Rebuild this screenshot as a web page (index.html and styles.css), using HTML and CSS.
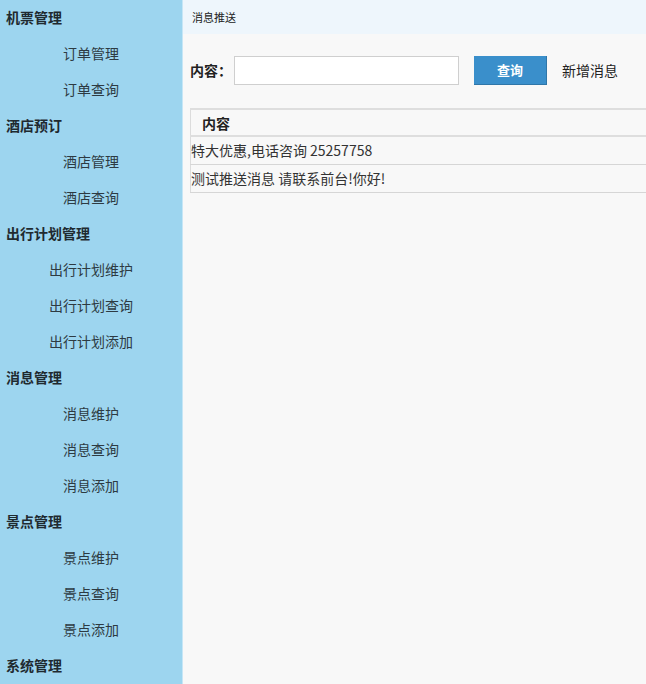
FILE: index.html
```html
<!DOCTYPE html>
<html lang="zh">
<head>
<meta charset="utf-8">
<title>消息推送</title>
<link rel="stylesheet" href="styles.css">
</head>
<body>
<div class="layout">
  <aside class="sidebar">
    <div class="group">机票管理</div>
    <div class="item">订单管理</div>
    <div class="item">订单查询</div>
    <div class="group">酒店预订</div>
    <div class="item">酒店管理</div>
    <div class="item">酒店查询</div>
    <div class="group">出行计划管理</div>
    <div class="item">出行计划维护</div>
    <div class="item">出行计划查询</div>
    <div class="item">出行计划添加</div>
    <div class="group">消息管理</div>
    <div class="item">消息维护</div>
    <div class="item">消息查询</div>
    <div class="item">消息添加</div>
    <div class="group">景点管理</div>
    <div class="item">景点维护</div>
    <div class="item">景点查询</div>
    <div class="item">景点添加</div>
    <div class="group">系统管理</div>
  </aside>
  <main class="main">
    <div class="crumb">消息推送</div>
    <div class="content">
      <form class="search">
        <label class="label">内容：</label>
        <input class="field" type="text">
        <button class="btn" type="button">查询</button>
        <a class="add">新增消息</a>
      </form>
      <table class="grid">
        <thead><tr><th>内容</th></tr></thead>
        <tbody>
          <tr><td>特大优惠,电话咨询 25257758</td></tr>
          <tr><td>测试推送消息 请联系前台!你好!</td></tr>
        </tbody>
      </table>
    </div>
  </main>
</div>
</body>
</html>
```
FILE: styles.css
```css
html, body {
  margin: 0;
  padding: 0;
  height: 100%;
}
body {
  font-family: "Noto Sans CJK SC", "Open Sans", sans-serif;
  font-size: 14px;
  color: #333;
  background: #f8f8f8;
  overflow: hidden;
}
.layout {
  display: flex;
  height: 684px;
}
.sidebar {
  width: 182px;
  flex: none;
  background: #9dd5ef;
  display: flex;
  flex-direction: column;
}
.group {
  height: 36px;
  line-height: 35px;
  padding-left: 6px;
  font-weight: bold;
  color: #1f2a30;
  font-size: 14px;
}
.item {
  height: 36px;
  line-height: 35px;
  text-align: center;
  color: #2d3a42;
  font-size: 14px;
}
.main {
  flex: 1;
  min-width: 0;
  border-left: 1px solid #c6e6f6;
  background: #f8f8f8;
}
.crumb {
  height: 34px;
  line-height: 34px;
  background: #eef6fc;
  padding-left: 9px;
  font-size: 11px;
  color: #222;
}
.content {
  padding: 21px 0 0 7px;
}
.search {
  display: flex;
  align-items: center;
  height: 30px;
  margin: 0;
}
.label {
  font-size: 14px;
  font-weight: 600;
  color: #222;
  width: 44px;
}
.field {
  width: 225px;
  box-sizing: border-box;
  height: 29px;
  border: 1px solid #cfcfcf;
  background: #fff;
  margin: 0;
  padding: 0 4px;
}
.btn {
  margin-left: 15px;
  width: 73px;
  height: 29px;
  background: #3a8fcb;
  border: none;
  border-bottom: 1px solid #2f76a8;
  border-right: 1px solid #2f76a8;
  color: #fff;
  font-family: inherit;
  font-size: 13px;
  font-weight: bold;
  padding: 0;
}
.add {
  margin-left: 15px;
  font-size: 14px;
  color: #222;
}
.grid {
  margin-top: 23px;
  width: calc(100% + 20px);
  border-collapse: collapse;
  border-left: 1px solid #dcdcdc;
}
.grid th {
  text-align: left;
  height: 25px;
  padding: 0 0 0 11px;
  font-size: 14px;
  font-weight: bold;
  color: #222;
  border-top: 2px solid #dedede;
  border-bottom: 2px solid #dedede;
}
.grid td {
  height: 25px;
  padding: 0 0 2px 0;
  font-size: 14px;
  color: #333;
  border-bottom: 1px solid #d6d6d6;
}
```
